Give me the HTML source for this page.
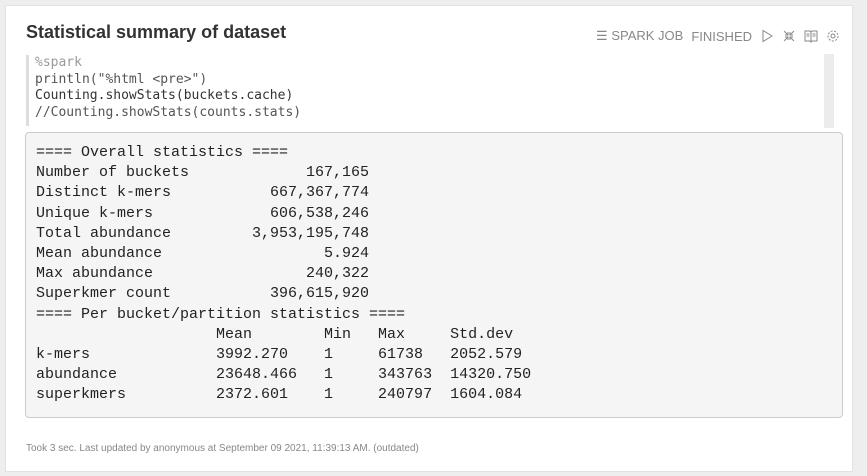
<!DOCTYPE html>
<html><head><style>
body{margin:0;width:867px;height:476px;background:#eeeeee;font-family:"Liberation Sans",sans-serif;overflow:hidden;position:relative}
.card{position:absolute;left:5px;top:5px;width:846px;height:465px;background:#fff;border:1px solid #e2e2e2}
h1{position:absolute;left:20px;top:16px;margin:0;font-size:18px;font-weight:bold;color:#333}
.hdr{position:absolute;right:12px;top:22px;font-size:13px;color:#888;display:flex;align-items:center;gap:8px}
.code{position:absolute;left:20px;top:49px;width:790px;height:71px;border-left:3px solid #ddd;}
.code pre{margin:0;padding-left:6px;font-family:"DejaVu Sans Mono",monospace;font-size:13px;line-height:16.7px;color:#333}
.sb{position:absolute;left:818px;top:48px;width:10px;height:74px;background:#ececec}
.out{position:absolute;left:19px;top:126px;width:816px;height:284px;background:#f5f5f5;border:1px solid #ccc;border-radius:4px}
.out pre{margin:0;padding:10px 0 0 10px;font-family:"Liberation Mono",monospace;font-size:15px;line-height:20.2px;color:#222}
.foot{position:absolute;left:20px;top:437px;font-size:10px;color:#888}
</style></head><body>
<div class="card">
<h1>Statistical summary of dataset</h1>
<div class="hdr"><span>☰ SPARK JOB</span><span>FINISHED</span>
<svg width="14" height="14" viewBox="0 0 14 14"><path d="M3 1.5 L12 7 L3 12.5 Z" fill="none" stroke="#888"/></svg>
<svg width="14" height="14" viewBox="0 0 14 14" stroke="#888" fill="none"><path d="M2 2l4 4M6 3v3H3M12 2L8 6M8 3v3h3M2 12l4-4M3 8h3v3M12 12L8 8M11 8H8v3"/></svg>
<svg width="14" height="14" viewBox="0 0 14 14" stroke="#888" fill="none"><path d="M1 2h5l1 1 1-1h5v10H8l-1 1-1-1H1z M7 3v9 M2.5 5h3M2.5 7h3M8.5 5h3M8.5 7h3"/></svg>
<svg width="14" height="14" viewBox="0 0 14 14" stroke="#888" fill="none"><circle cx="7" cy="7" r="2"/><circle cx="7" cy="7" r="5" stroke-dasharray="2 1.5"/></svg>
</div>
<div class="code"><pre><span style="color:#999">%spark</span>
<span style="color:#555">println("%html &lt;pre&gt;")</span>
Counting.showStats(buckets.cache)
<span style="color:#555">//Counting.showStats(counts.stats)</span></pre></div>
<div class="sb"></div>
<div class="out"><pre>==== Overall statistics ====
Number of buckets             167,165
Distinct k-mers           667,367,774
Unique k-mers             606,538,246
Total abundance         3,953,195,748
Mean abundance                  5.924
Max abundance                 240,322
Superkmer count           396,615,920
==== Per bucket/partition statistics ====
                    Mean        Min   Max     Std.dev
k-mers              3992.270    1     61738   2052.579
abundance           23648.466   1     343763  14320.750
superkmers          2372.601    1     240797  1604.084</pre></div>
<div class="foot">Took 3 sec. Last updated by anonymous at September 09 2021, 11:39:13 AM. (outdated)</div>
</div>
</body></html>
